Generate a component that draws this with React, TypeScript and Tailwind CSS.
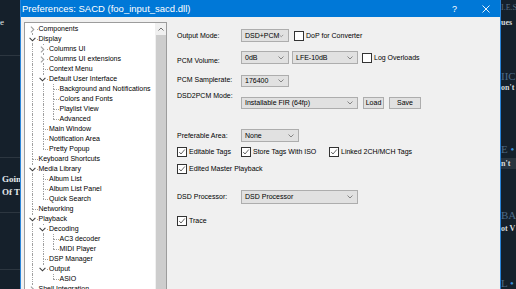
import React from 'react';

type TreeNode = { label: string; level: number; exp?: 'open' | 'closed' };

const tree: TreeNode[] = [
  { label: 'Components', level: 0, exp: 'closed' },
  { label: 'Display', level: 0, exp: 'open' },
  { label: 'Columns UI', level: 1, exp: 'closed' },
  { label: 'Columns UI extensions', level: 1, exp: 'closed' },
  { label: 'Context Menu', level: 1 },
  { label: 'Default User Interface', level: 1, exp: 'open' },
  { label: 'Background and Notifications', level: 2 },
  { label: 'Colors and Fonts', level: 2 },
  { label: 'Playlist View', level: 2 },
  { label: 'Advanced', level: 2 },
  { label: 'Main Window', level: 1 },
  { label: 'Notification Area', level: 1 },
  { label: 'Pretty Popup', level: 1 },
  { label: 'Keyboard Shortcuts', level: 0 },
  { label: 'Media Library', level: 0, exp: 'open' },
  { label: 'Album List', level: 1 },
  { label: 'Album List Panel', level: 1 },
  { label: 'Quick Search', level: 1 },
  { label: 'Networking', level: 0 },
  { label: 'Playback', level: 0, exp: 'open' },
  { label: 'Decoding', level: 1, exp: 'open' },
  { label: 'AC3 decoder', level: 2 },
  { label: 'MIDI Player', level: 2 },
  { label: 'DSP Manager', level: 1 },
  { label: 'Output', level: 1, exp: 'open' },
  { label: 'ASIO', level: 2 },
  { label: 'Shell Integration', level: 0, exp: 'closed' },
  { label: 'Tagging', level: 0, exp: 'closed' },
];

// does row i have a later sibling at the same level?
const hasNext = (i: number) => {
  const lv = tree[i].level;
  for (let j = i + 1; j < tree.length; j++) {
    if (tree[j].level < lv) return false;
    if (tree[j].level === lv) return true;
  }
  return false;
};

const ancestorContinues = (i: number, k: number) => {
  for (let j = i - 1; j >= 0; j--) {
    if (tree[j].level === k) return hasNext(j);
  }
  return false;
};

const Chevron = ({ open }: { open: boolean }) => (
  <div className="relative w-[8px] h-[8px] bg-white flex items-center justify-center">
    {open ? (
      <svg width="7" height="5" viewBox="0 0 7 5">
        <polyline points="0.6,0.9 3.5,3.8 6.4,0.9" fill="none" stroke="#3c3c3c" strokeWidth="1.1" />
      </svg>
    ) : (
      <svg width="5" height="7" viewBox="0 0 5 7">
        <polyline points="0.9,0.6 3.8,3.5 0.9,6.4" fill="none" stroke="#a0a0a0" strokeWidth="1.1" />
      </svg>
    )}
  </div>
);

const TreeRow = ({ node, i }: { node: TreeNode; i: number }) => {
  const cells = [];
  for (let k = 0; k < node.level; k++) {
    cells.push(
      <div key={k} className="relative w-[10.5px] h-full shrink-0">
        {ancestorContinues(i, k) && (
          <div className="absolute left-[5px] top-0 bottom-0 border-l border-dotted border-[#a0a0a0]" />
        )}
      </div>
    );
  }
  return (
    <div className="flex h-[10px] items-center">
      {cells}
      <div className="relative w-[10.5px] h-full shrink-0 flex items-center justify-center">
        {i > 0 && <div className="absolute left-[5px] top-0 h-[5px] border-l border-dotted border-[#a0a0a0]" />}
        {hasNext(i) && <div className="absolute left-[5px] top-[5px] bottom-0 border-l border-dotted border-[#a0a0a0]" />}
        <div className="absolute left-[5px] right-0 top-[5px] border-t border-dotted border-[#a0a0a0]" />
        {node.exp && <Chevron open={node.exp === 'open'} />}
      </div>
      <span className="pl-[1px] whitespace-nowrap leading-[10px]">{node.label}</span>
    </div>
  );
};

const Combo = ({ text, w, h = 'h-[13px]' }: { text: string; w: string; h?: string }) => (
  <div className={`${w} ${h} shrink-0 border border-[#adadad] bg-[#e1e1e1] flex items-center justify-between pl-[3px] pr-[4px]`}>
    <span className="whitespace-nowrap leading-[10px]">{text}</span>
    <svg width="6" height="4" viewBox="0 0 6 4">
      <polyline points="0.5,0.5 3,3 5.5,0.5" fill="none" stroke="#7a7a7a" strokeWidth="0.9" />
    </svg>
  </div>
);

const Check = ({ label, checked = false }: { label: string; checked?: boolean }) => (
  <div className="flex items-center h-[10px] shrink-0">
    <div className="w-[10px] h-[10px] border border-[#333333] bg-white flex items-center justify-center">
      {checked && (
        <svg width="8" height="8" viewBox="0 0 8 8">
          <polyline points="1.2,4 3,6 6.8,1.5" fill="none" stroke="#555555" strokeWidth="0.9" />
        </svg>
      )}
    </div>
    <span className="ml-[2px] whitespace-nowrap leading-[10px]">{label}</span>
  </div>
);

const Button = ({ text, w }: { text: string; w: string }) => (
  <div className={`${w} h-[12px] border border-[#adadad] bg-[#e1e1e1] flex items-center justify-center leading-[10px]`}>
    {text}
  </div>
);

export default function App() {
  return (
    <div className="w-[516px] h-[289px] overflow-hidden flex bg-[#15202b] font-['Liberation_Sans',Arial,sans-serif] text-[7px] text-black">
      {/* page behind, left edge */}
      <div className="w-[20px] shrink-0 flex flex-col font-['Liberation_Serif',serif] text-[#e4e8ec]">
        <div className="h-[56px] border-b border-[#2c3640] pt-[17px] text-[9px] leading-[10px]">e</div>
        <div className="h-[102px] border-b border-[#2c3640]" />
        <div className="h-[55px] border-b border-[#2c3640] pt-[15px] pl-[2px] font-bold text-[9px] leading-[13px]">
          <div className="whitespace-nowrap">Goin</div>
          <div className="whitespace-nowrap">Of T</div>
        </div>
        <div className="h-[57px] border-b border-[#2c3640]" />
      </div>

      {/* dialog */}
      <div className="w-[481px] shrink-0 flex flex-col bg-[#f0f0f0] border-x border-[#2a84d8]">
        <div className="h-[17px] shrink-0 bg-[#0078d7] text-white flex items-center pl-[1px] pr-[10px]">
          <span className="flex-1 text-[9.5px] leading-[11px] whitespace-nowrap">Preferences: SACD (foo_input_sacd.dll)</span>
          <span className="text-[9px] leading-[10px] mr-[25px]">?</span>
          <svg width="8" height="8" viewBox="0 0 8 8">
            <path d="M0.5 0.5 L7.5 7.5 M7.5 0.5 L0.5 7.5" stroke="white" strokeWidth="0.9" />
          </svg>
        </div>

        <div className="flex pt-[5px] pl-[3px]">
          {/* tree */}
          <div className="w-[143px] h-[280px] shrink-0 border border-[#9c9c9c] bg-white flex overflow-hidden">
            <div className="flex-1 pt-[1px] pl-[2px] overflow-hidden">
              {tree.map((n, i) => (
                <TreeRow key={i} node={n} i={i} />
              ))}
            </div>
            <div className="w-[11px] shrink-0 bg-[#f0f0f0] flex flex-col items-center">
              <div className="h-[12px] flex items-center justify-center">
                <svg width="6" height="4" viewBox="0 0 6 4">
                  <polyline points="0.5,3.5 3,1 5.5,3.5" fill="none" stroke="#606060" strokeWidth="0.9" />
                </svg>
              </div>
              <div className="w-[10px] flex-1 bg-[#cdcdcd]" />
            </div>
          </div>

          {/* settings */}
          <div className="flex-1 pl-[10px] flex flex-col">
            <div className="mt-[7px] h-[13px] flex items-start">
              <span className="w-[64px] mt-[2px] leading-[10px]">Output Mode:</span>
              <Combo text="DSD+PCM" w="w-[48px]" />
              <div className="ml-[5px] mt-[2px]"><Check label="DoP for Converter" /></div>
            </div>
            <div className="mt-[9px] h-[13px] flex items-start">
              <span className="w-[64px] mt-[5px] leading-[10px]">PCM Volume:</span>
              <Combo text="0dB" w="w-[48px]" />
              <div className="ml-[3px]"><Combo text="LFE-10dB" w="w-[66px]" /></div>
              <div className="ml-[4px] mt-[2px]"><Check label="Log Overloads" /></div>
            </div>
            <div className="mt-[11px] h-[12px] flex items-start">
              <span className="w-[64px] mt-[0px] leading-[10px]">PCM Samplerate:</span>
              <Combo text="176400" w="w-[48px]" h="h-[12px]" />
            </div>
            <div className="mt-[4px] h-[18px] flex items-start">
              <span className="w-[64px] leading-[10px]">DSD2PCM Mode:</span>
              <div className="mt-[6px] flex">
                <Combo text="Installable FIR (64fp)" w="w-[117px]" h="h-[12px]" />
                <div className="ml-[5px]"><Button text="Load" w="w-[21px]" /></div>
                <div className="ml-[5px]"><Button text="Save" w="w-[32px]" /></div>
              </div>
            </div>
            <div className="mt-[20px] h-[13px] flex items-start">
              <span className="w-[64px] mt-[2px] leading-[10px]">Preferable Area:</span>
              <Combo text="None" w="w-[58px]" />
            </div>
            <div className="mt-[5px] h-[10px] flex">
              <div className="w-[64px]"><Check label="Editable Tags" checked /></div>
              <div className="w-[88px]"><Check label="Store Tags With ISO" checked /></div>
              <Check label="Linked 2CH/MCH Tags" checked />
            </div>
            <div className="mt-[7px] h-[10px] flex">
              <Check label="Edited Master Playback" checked />
            </div>
            <div className="mt-[16px] h-[14px] flex items-start">
              <span className="w-[64px] mt-[2px] leading-[10px]">DSD Processor:</span>
              <Combo text="DSD Processor" w="w-[117px]" h="h-[14px]" />
            </div>
            <div className="mt-[12px] h-[10px] flex">
              <Check label="Trace" checked />
            </div>
          </div>
        </div>
      </div>

      {/* page behind, right edge */}
      <div className="w-[15px] shrink-0 flex flex-col font-['Liberation_Serif',serif] whitespace-nowrap overflow-hidden">
        <div className="h-[17px] pt-[3px] text-[8px] leading-[10px] text-[#5c6f82]">I.E.S</div>
        <div className="pt-[1px] text-[8px] leading-[10px] text-[#d5dadf] font-bold">ues</div>
        <div className="mt-[42px] text-[11px] leading-[12px] text-[#4e6a86]">IIC</div>
        <div className="mt-[1px] text-[8px] leading-[10px] text-[#d5dadf] font-bold">on't</div>
        <div className="mt-[50px] text-[11px] leading-[12px] text-[#4e6a86]">E <span className="text-[#3b8fd9]">•</span></div>
        <div className="mt-[3px] text-[8px] leading-[11px] text-[#d5dadf] font-bold bg-[#2a343e]">n't</div>
        <div className="mt-[40px] text-[11px] leading-[12px] text-[#4e6a86]">BA</div>
        <div className="mt-[3px] text-[8px] leading-[10px] text-[#d5dadf] font-bold">ot V</div>
        <div className="mt-[43px] text-[11px] leading-[12px] text-[#4e6a86]">L <span className="text-[#3b8fd9]">•</span></div>
      </div>
    </div>
  );
}
